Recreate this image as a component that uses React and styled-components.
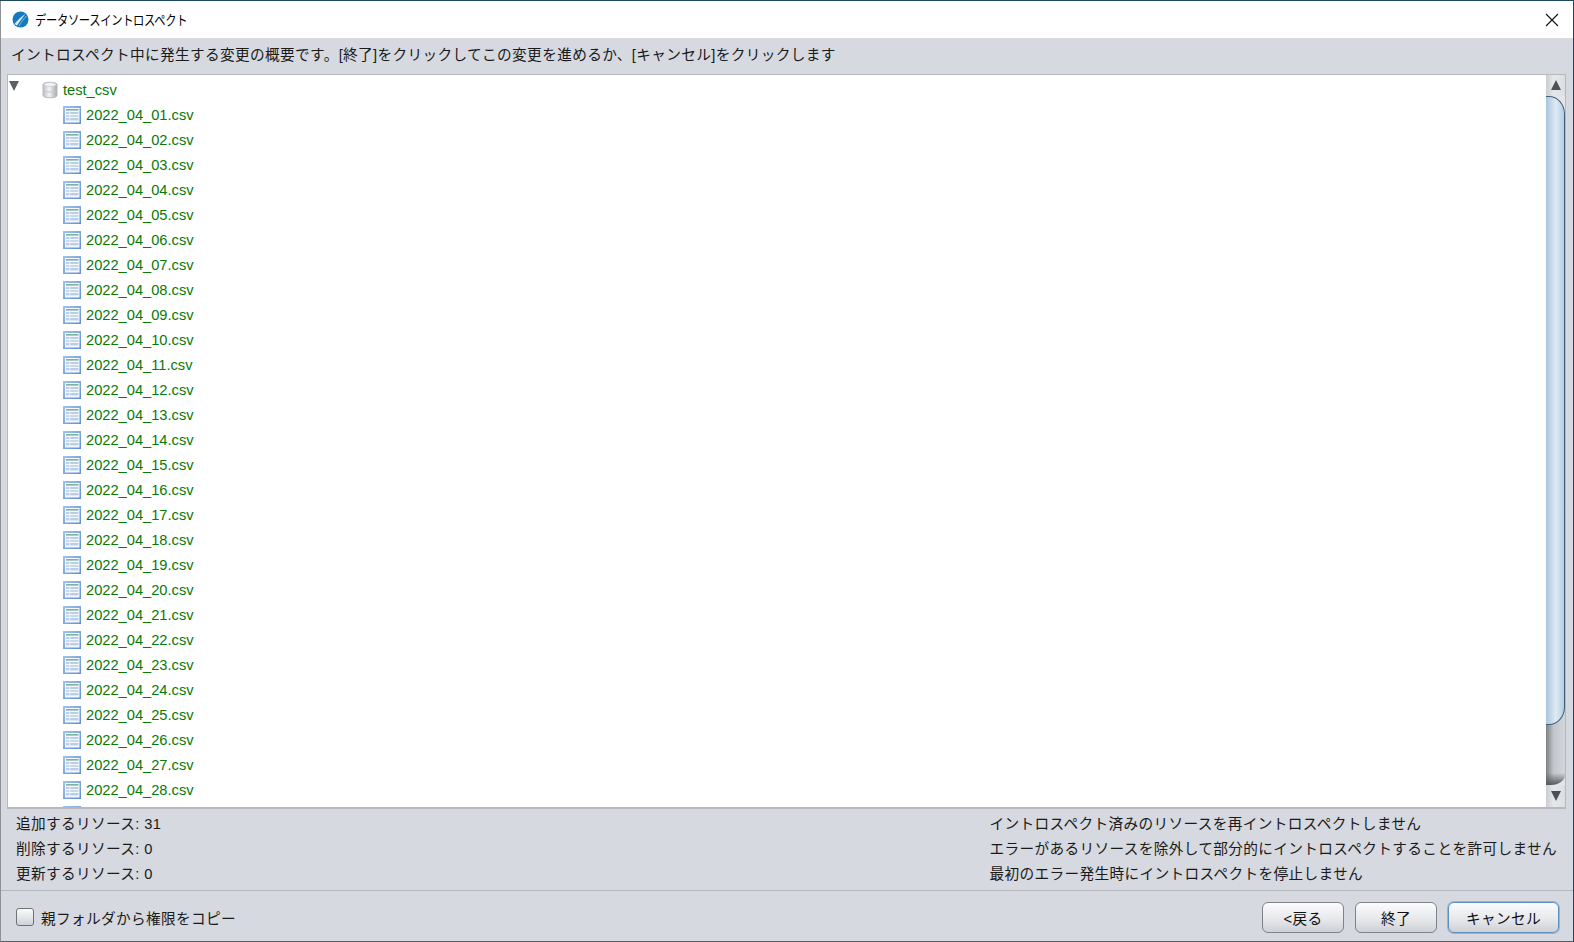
import React from 'react'
import styled, { createGlobalStyle } from 'styled-components'

const GlobalStyle = createGlobalStyle`
  html, body {
    margin: 0;
    padding: 0;
    background: #1c4a5a;
  }
  body {
    font-family: "Liberation Sans", "Noto Sans CJK JP", sans-serif;
  }
`

const files = Array.from({ length: 30 }, (_, i) => `2022_04_${String(i + 1).padStart(2, '0')}.csv`)

const Logo = () => (
  <svg width="17" height="17" viewBox="0 0 17 17">
    <circle cx="8.5" cy="8.5" r="8" fill="#1279c2" />
    <path d="M2.5 13 C6 9 9.5 5.5 13.5 2.8 C10.8 6.2 8 10 5 14.5 Z" fill="#dcedf8" />
    <path d="M7 15 C9 11.5 11.5 8 14.5 5" fill="none" stroke="#8cc4e8" strokeWidth="0.9" />
  </svg>
)

const CloseIcon = () => (
  <svg width="14" height="14" viewBox="0 0 14 14">
    <path d="M1 1 L13 13 M13 1 L1 13" stroke="#111" strokeWidth="1.1" fill="none" />
  </svg>
)

const DbIcon = () => (
  <svg width="16" height="18" viewBox="0 0 16 18">
    <defs>
      <linearGradient id="db" x1="0" x2="1" y1="0" y2="0">
        <stop offset="0" stopColor="#bcc0c5" />
        <stop offset="0.45" stopColor="#f2f3f4" />
        <stop offset="1" stopColor="#a4a8ae" />
      </linearGradient>
    </defs>
    <path d="M1 3.5 C1 0.5 15 0.5 15 3.5 V14.5 C15 17.5 1 17.5 1 14.5 Z" fill="url(#db)" stroke="#b4b8bd" />
    <ellipse cx="8" cy="3.6" rx="6" ry="2.1" fill="#eef0f2" stroke="#c3c6ca" strokeWidth="0.7" />
    <path d="M1.5 9.5 C4 11.5 12 11.5 14.5 9.5" fill="none" stroke="#c4c7cb" />
  </svg>
)

const TableIcon = () => (
  <svg width="18" height="18" viewBox="0 0 18 18">
    <defs>
      <linearGradient id="frame" x1="0" x2="1" y1="0" y2="1">
        <stop offset="0" stopColor="#a3c2ea" />
        <stop offset="1" stopColor="#5f90d2" />
      </linearGradient>
    </defs>
    <rect x="0" y="0" width="18" height="18" fill="url(#frame)" />
    <rect x="2" y="2" width="14.5" height="14.5" fill="#f4f8fd" />
    <rect x="3" y="3" width="12.5" height="1.6" fill="#7fb29f" />
    <rect x="3" y="6" width="3.4" height="2" fill="#b9cfe8" />
    <rect x="7.2" y="6" width="8.3" height="2" fill="#b9cfe8" />
    <rect x="3" y="9" width="3.4" height="2" fill="#c6d8ec" />
    <rect x="7.2" y="9" width="8.3" height="2" fill="#c6d8ec" />
    <rect x="3" y="12" width="3.4" height="2.4" fill="#b9cfe8" />
    <rect x="7.2" y="12" width="8.3" height="2.4" fill="#b9cfe8" />
  </svg>
)

export default function App() {
  return (
    <Dialog>
      <GlobalStyle />
      <TitleBar>
        <Logo />
        <TitleText>データソースイントロスペクト</TitleText>
        <CloseButton><CloseIcon /></CloseButton>
      </TitleBar>
      <Message>イントロスペクト中に発生する変更の概要です。[終了]をクリックしてこの変更を進めるか、[キャンセル]をクリックします</Message>
      <TreePanel>
        <Tree>
          <Row>
            <Caret />
            <RootIcon><DbIcon /></RootIcon>
            <Name>test_csv</Name>
          </Row>
          {files.map(f => (
            <FileRow key={f}>
              <TableIcon />
              <Name>{f}</Name>
            </FileRow>
          ))}
        </Tree>
        <ScrollBar>
          <ArrowButton><ArrowUp /></ArrowButton>
          <Thumb />
          <Track />
          <ArrowButton $bottom><ArrowDown /></ArrowButton>
        </ScrollBar>
      </TreePanel>
      <Summary>
        <SummaryColumn>
          <Line>追加するリソース: 31</Line>
          <Line>削除するリソース: 0</Line>
          <Line>更新するリソース: 0</Line>
        </SummaryColumn>
        <SummaryColumn>
          <Line>イントロスペクト済みのリソースを再イントロスペクトしません</Line>
          <Line>エラーがあるリソースを除外して部分的にイントロスペクトすることを許可しません</Line>
          <Line>最初のエラー発生時にイントロスペクトを停止しません</Line>
        </SummaryColumn>
      </Summary>
      <Footer>
        <CheckLabel>
          <CheckBox />
          親フォルダから権限をコピー
        </CheckLabel>
        <Buttons>
          <Button>&lt;戻る</Button>
          <Button>終了</Button>
          <Button $primary>キャンセル</Button>
        </Buttons>
      </Footer>
    </Dialog>
  )
}

const Dialog = styled.div`
  width: 1573px;
  height: 941px;
  border-left: 1px solid #8f9196;
  border-bottom: 1px solid #5a5e64;
  box-sizing: border-box;
  margin-top: 1px;
  display: flex;
  flex-direction: column;
  background: #d6d9df;
  color: #1a1a1a;
  font-size: 14.67px;
  overflow: hidden;
`

const TitleBar = styled.div`
  height: 37px;
  flex: none;
  display: flex;
  align-items: center;
  padding-left: 11px;
  background: #fff;
`

const TitleText = styled.span`
  margin-left: 6px;
  font-size: 13.3px;
  letter-spacing: -0.4px;
  color: #000;
  transform: scaleX(0.85);
  transform-origin: left center;
`

const CloseButton = styled.div`
  margin-left: auto;
  margin-right: 14px;
  display: flex;
`

const Message = styled.div`
  height: 36px;
  flex: none;
  box-sizing: border-box;
  padding: 8px 0 0 10px;
  line-height: 18px;
  letter-spacing: 0.35px;
`

const TreePanel = styled.div`
  height: 735px;
  flex: none;
  margin: 0 7px 0 6px;
  display: flex;
  border: 1px solid #b6b8bc;
  border-width: 1px 1px 2px 1px;
  box-sizing: border-box;
`

const Tree = styled.div`
  flex: 1;
  padding-top: 2px;
  background: #fff;
  overflow: hidden;
`

const Row = styled.div`
  height: 25px;
  display: flex;
  align-items: center;
`

const FileRow = styled(Row)`
  padding-left: 55px;
  gap: 5px;
`

const Caret = styled.span`
  width: 0;
  height: 0;
  margin: -7px 0 0 1px;
  border-left: 5.5px solid transparent;
  border-right: 5.5px solid transparent;
  border-top: 10px solid #5c5f64;
`

const RootIcon = styled.span`
  display: flex;
  margin-left: 23px;
  margin-right: 5px;
`

const Name = styled.span`
  color: #087a08;
`

const ScrollBar = styled.div`
  width: 19px;
  flex: none;
  display: flex;
  flex-direction: column;
  background: #e3e5e8;
`

const ArrowButton = styled.div`
  height: ${p => (p.$bottom ? '22px' : '21px')};
  flex: none;
  display: flex;
  align-items: center;
  justify-content: center;
  background: linear-gradient(90deg, #c9ccd2, #e6e8eb 40%, #dcdee2);
`

const ArrowUp = styled.span`
  width: 0;
  height: 0;
  margin-bottom: 2px;
  border-left: 5px solid transparent;
  border-right: 5px solid transparent;
  border-bottom: 10px solid #4d5055;
`

const ArrowDown = styled(ArrowUp)`
  margin-bottom: 0;
  border-bottom: 0;
  border-top: 10px solid #4d5055;
`

const Thumb = styled.div`
  height: 629px;
  flex: none;
  box-sizing: border-box;
  position: relative;
  border: 1px solid #3e5f7c;
  border-left: 0;
  border-radius: 0 16px 16px 0 / 0 18px 18px 0;
  background: linear-gradient(90deg, #a9c4de, #e0ebf4 55%, #b5cde2);
`

const Track = styled.div`
  flex: 1;
  margin-top: -18px;
  border-radius: 0 0 14px 0 / 0 0 10px 0;
  background:
    linear-gradient(180deg, transparent calc(100% - 12px), #55585d),
    linear-gradient(90deg, #7b7e83, #c3c6cb 40%, #d3d6db);
`

const Summary = styled.div`
  height: 82px;
  flex: none;
  display: flex;
  justify-content: space-between;
  padding: 3px 16px 0 15px;
  box-sizing: border-box;
  border-bottom: 1px solid #b4b7bc;
`

const SummaryColumn = styled.div`
  display: flex;
  flex-direction: column;
`

const Line = styled.div`
  height: 25px;
  line-height: 25px;
  letter-spacing: 0.35px;
  white-space: nowrap;
`

const Footer = styled.div`
  flex: 1;
  display: flex;
  align-items: center;
  justify-content: space-between;
  padding: 2px 14px 0 15px;
`

const CheckLabel = styled.label`
  display: flex;
  align-items: center;
  gap: 7px;
  letter-spacing: 0.35px;
`

const CheckBox = styled.span`
  width: 18px;
  height: 18px;
  box-sizing: border-box;
  border: 1px solid #6e7278;
  border-radius: 3px;
  background: linear-gradient(180deg, #fbfbfc, #cfd2d7);
`

const Buttons = styled.div`
  display: flex;
  gap: 11px;
`

const Button = styled.button`
  width: ${p => (p.$primary ? '111px' : '82px')};
  height: 31px;
  box-sizing: border-box;
  padding: 0;
  border: 1px solid ${p => (p.$primary ? '#5f8fbc' : '#7f8287')};
  border-radius: 6px;
  background: linear-gradient(180deg, #fcfcfd, #e4e6e9 60%, #cdd0d5);
  box-shadow: ${p => (p.$primary ? '0 0 0 1px #8fb6d8' : 'none')};
  font: inherit;
  color: #111;
  letter-spacing: 0.35px;
`
